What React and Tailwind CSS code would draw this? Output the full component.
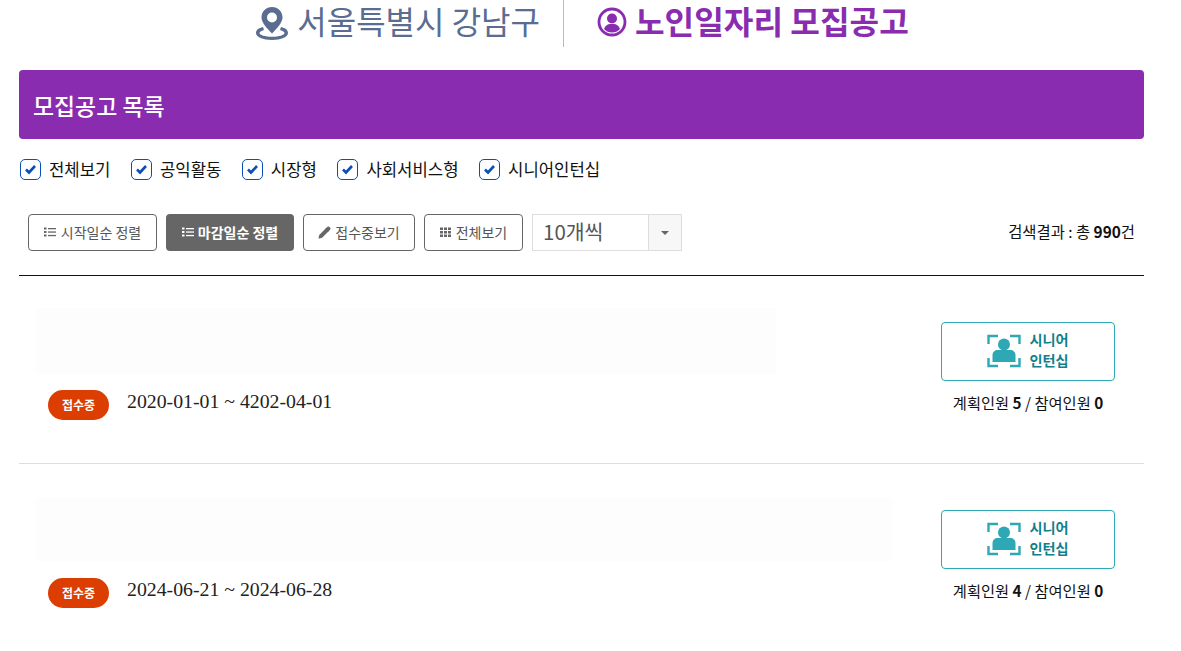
import { Pencil } from 'lucide-react'

const filters = ['전체보기', '공익활동', '시장형', '사회서비스형', '시니어인턴십']

const jobs = [
  {
    period: '2020-01-01 ~ 4202-04-01',
    planned: 5,
    joined: 0,
    rowClass: 'h-[188px] pt-[32px] border-b border-[#dddddd]',
    barClass: 'w-[740px] h-[66px]',
    badgeClass: 'mt-[16px]',
    boxClass: 'mt-[14px]',
  },
  {
    period: '2024-06-21 ~ 2024-06-28',
    planned: 4,
    joined: 0,
    rowClass: 'h-[187px] pt-[34px]',
    barClass: 'w-[856px] h-[63px]',
    badgeClass: 'mt-[17px]',
    boxClass: 'mt-[12px]',
  },
]

const PinIcon = () => (
  <svg className="mt-[7px]" width="32" height="33" viewBox="0 0 32 33">
    <path d="M7 20 C2.500 21 0 23 0 26 C0 30 7 33 16 33 C25 33 32 30 32 26 C32 23 29.500 21 25 20 L24 23 C27 23.800 28.500 25 28.500 26 C28.500 28 23 29.800 16 29.800 C9 29.800 3.500 28 3.500 26 C3.500 25 5 23.800 8 23 Z" fill="#5a6d91" />
    <path fillRule="evenodd" d="M16 0 C10 0 5.500 4.500 5.500 10.500 C5.500 15 10 20.500 16 26.500 C22 20.500 26.500 15 26.500 10.500 C26.500 4.500 22 0 16 0 Z M16 5.500 A5 5 0 1 1 16 15.500 A5 5 0 1 1 16 5.500 Z" fill="#5a6d91" />
  </svg>
)

const PersonCircle = () => (
  <svg className="mt-[6px]" width="30" height="32" viewBox="0 0 30 32">
    <circle cx="15" cy="16" r="13" fill="none" stroke="#8a2cb0" strokeWidth="2.800" />
    <circle cx="15" cy="12.500" r="5" fill="#8a2cb0" />
    <path d="M7 23 C8 19.500 11 18 13 18 L17 18 C19 18 22 19.500 23 23 C21 25.500 18 26.500 15 26.500 C12 26.500 9 25.500 7 23 Z" fill="#8a2cb0" />
  </svg>
)

const ListIcon = ({ color }) => (
  <svg width="12" height="10" viewBox="0 0 12 10" fill={color}>
    <rect x="0" y="0.500" width="2.500" height="2" />
    <rect x="0" y="4" width="2.500" height="2" />
    <rect x="0" y="7.500" width="2.500" height="2" />
    <rect x="4" y="1" width="8" height="1.300" />
    <rect x="4" y="4.400" width="8" height="1.300" />
    <rect x="4" y="7.900" width="8" height="1.300" />
  </svg>
)

const GridIcon = () => (
  <svg width="11" height="10" viewBox="0 0 11 10" fill="#666">
    {[0, 4, 8].map((x) => [0.500, 4, 7.500].map((y) => (
      <rect key={`${x}-${y}`} x={x} y={y} width="3" height="2.500" />
    )))}
  </svg>
)

const SeniorIcon = () => (
  <svg className="mt-px" width="34" height="34" viewBox="0 0 34 34" fill="none">
    <path d="M1.500 10 V2 H11 M23 2 H32.500 V10 M1.500 24 V32 H11 M23 32 H32.500 V24" stroke="#2fa8b5" strokeWidth="2.400" />
    <circle cx="17" cy="10.500" r="6" fill="#2fa8b5" />
    <path d="M5.500 28 V21 C5.500 18 8 16 10.500 16 L23.500 16 C26 16 28.500 18 28.500 21 V28 Z" fill="#2fa8b5" />
  </svg>
)

const Check = () => (
  <span className="w-[21px] h-[21px] rounded-[5px] border border-[#0b4fb5] bg-white flex items-center justify-center">
    <svg width="13" height="11" viewBox="0 0 13 11" fill="none">
      <path d="M2 5.500 L5 8.500 L11 2" stroke="#0b4fb5" strokeWidth="2.600" />
    </svg>
  </span>
)

const JobRow = ({ job }) => (
  <div className={`flex justify-between ${job.rowClass}`}>
    <div className="pl-[17px]">
      <div className={`${job.barClass} bg-[#fdfdfd]`} />
      <div className={`flex items-start pl-[12px] ${job.badgeClass}`}>
        <span className="w-[61px] h-[30px] pb-px rounded-full bg-[#dc3d00] text-white text-[12px] font-bold flex items-center justify-center">접수중</span>
        <span className="ml-[18px] text-[19.800px] leading-[22px] text-[#222222] font-['Liberation_Serif',serif]">{job.period}</span>
      </div>
    </div>
    <div className={`w-[174px] mr-[29px] ${job.boxClass}`}>
      <div className="h-[59px] pb-[3px] rounded-[4px] border border-[#2fa8b5] flex items-center justify-center gap-[8px]">
        <SeniorIcon />
        <span className="text-[14.200px] leading-[21px] font-bold text-[#117f8c] text-center">시니어<br />인턴십</span>
      </div>
      <p className="text-center text-[15.300px] text-[#111111] mt-[10px] leading-[22px]">
        계획인원 <b>{job.planned}</b> / 참여인원 <b>{job.joined}</b>
      </p>
    </div>
  </div>
)

export default function App() {
  return (
    <div className="w-[1181px] h-[651px] overflow-hidden bg-white font-['Noto_Sans_CJK_KR','Noto_Sans',sans-serif]">
      <header className="h-[47px] flex justify-center items-start">
        <div className="w-[563px] flex items-start justify-end pr-[23px] gap-[9px] text-[32px] leading-[40px] text-[#5a6d91]">
          <PinIcon />
          <span>서울특별시 강남구</span>
        </div>
        <div className="w-px h-[47px] bg-[#bbbbbb]" />
        <div className="w-[617px] flex items-start pl-[33px] gap-[8px] text-[32.200px] leading-[40px] font-bold text-[#8a2cb0]">
          <PersonCircle />
          <span>노인일자리 모집공고</span>
        </div>
      </header>

      <main className="mx-[19px] w-[1125px] mt-[23px]">
        <div className="h-[69px] pt-px rounded-[4px] bg-[#8a2cb0] flex items-center pl-[14px] text-[22.900px] font-medium text-white">
          모집공고 목록
        </div>

        <div className="flex items-center mt-[19px] pl-px h-[23px]">
          {filters.map((f) => (
            <label key={f} className="flex items-center gap-[8px] mr-[20.500px] text-[16.700px] leading-[20px] text-[#111111]">
              <Check />
              <span className="pb-[2px]">{f}</span>
            </label>
          ))}
        </div>

        <div className="flex items-center h-[37px] mt-[33px] pl-[9px] gap-[9px]">
          <button className="w-[129px] h-[37px] pb-px rounded-[4px] border border-[#666666] flex items-center justify-center gap-[5px] text-[14px] text-[#555555]">
            <ListIcon color="#666" /> 시작일순 정렬
          </button>
          <button className="w-[128px] h-[37px] pb-px rounded-[4px] bg-[#666666] flex items-center justify-center gap-[4px] text-[14px] font-bold text-white">
            <ListIcon color="#fff" /> 마감일순 정렬
          </button>
          <button className="w-[112px] h-[37px] pb-px rounded-[4px] border border-[#666666] flex items-center justify-center gap-[4px] text-[14px] text-[#555555]">
            <Pencil size={13} fill="#666" stroke="#666" /> 접수중보기
          </button>
          <button className="w-[99px] h-[37px] pb-px rounded-[4px] border border-[#666666] flex items-center justify-center gap-[5px] text-[14px] text-[#555555]">
            <GridIcon /> 전체보기
          </button>
          <div className="w-[150px] h-[37px] border border-[#dddddd] flex">
            <span className="flex-1 pl-[10px] text-[20.500px] leading-[32px] text-[#555555]">10개씩</span>
            <span className="w-[33px] border-l border-[#dddddd] bg-[#f7f7f7] flex items-center justify-center">
              <span className="w-0 h-0 border-x-[4px] border-x-transparent border-t-[4px] border-t-[#666666]" />
            </span>
          </div>
          <p className="ml-auto mr-[9px] pb-[2px] text-[15.400px] text-[#111111]">검색결과 : 총 <b>990</b>건</p>
        </div>

        <div className="mt-[24px] border-t border-[#111111]">
          {jobs.map((job) => (
            <JobRow key={job.period} job={job} />
          ))}
        </div>
      </main>
    </div>
  )
}
